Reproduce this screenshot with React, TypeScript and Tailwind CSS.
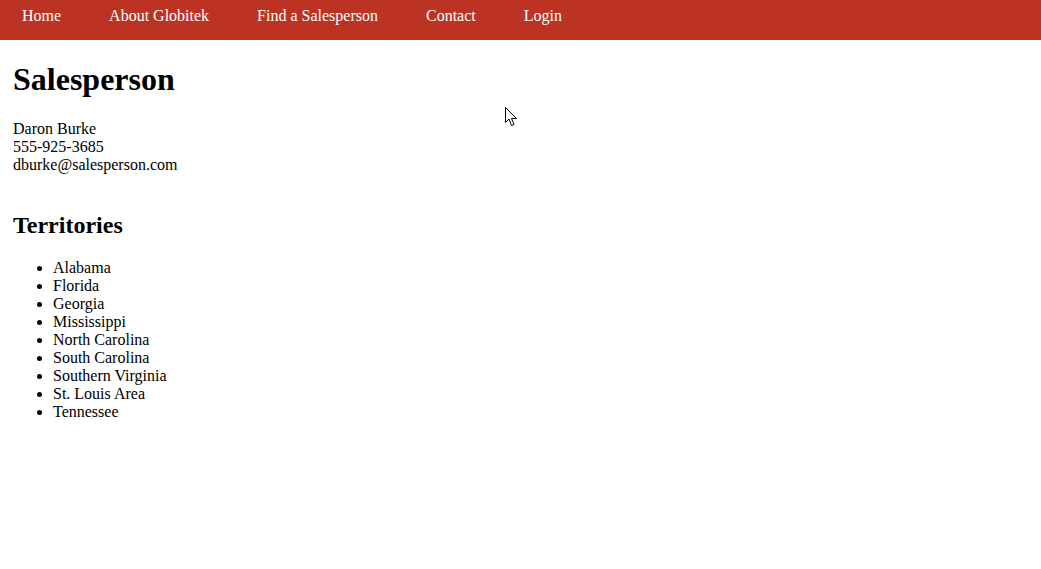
const navLinks = ["Home", "About Globitek", "Find a Salesperson", "Contact", "Login"];

const territories = [
  "Alabama",
  "Florida",
  "Georgia",
  "Mississippi",
  "North Carolina",
  "South Carolina",
  "Southern Virginia",
  "St. Louis Area",
  "Tennessee",
];

function Cursor() {
  return (
    <svg
      className="absolute left-[505px] top-[107px]"
      width="13"
      height="20"
      viewBox="0 0 13 20"
    >
      <path
        d="M0.5 0.5 L0.5 15.5 L4 12 L6.5 18.5 L9 17.5 L6.5 11.5 L11.5 11.5 Z"
        fill="#fff"
        stroke="#000"
        strokeWidth="1"
        strokeLinejoin="miter"
      />
    </svg>
  );
}

export default function App() {
  return (
    <div className="relative min-h-[569px] w-full bg-white font-['Liberation_Serif','Times_New_Roman',serif] text-[16px] leading-[18px] text-black">
      <nav className="flex h-[40px] items-start gap-[48px] bg-[#bc3324] pl-[22px] pt-[7px] text-white">
        {navLinks.map((link) => (
          <a key={link} href="#" className="leading-[18px]">
            {link}
          </a>
        ))}
      </nav>

      <main className="px-[13px]">
        <h1 className="pt-[21px] text-[32px] font-bold leading-[37px]">Salesperson</h1>

        <div className="pt-[22px]">
          <div>Daron Burke</div>
          <div>555-925-3685</div>
          <div>dburke@salesperson.com</div>
          <div className="h-[17px]" />
        </div>

        <h2 className="pt-[20px] text-[24px] font-bold leading-[28px]">Territories</h2>

        <ul className="list-disc pl-[40px] pt-[20px]">
          {territories.map((t) => (
            <li key={t}>{t}</li>
          ))}
        </ul>
      </main>

      <Cursor />
    </div>
  );
}
